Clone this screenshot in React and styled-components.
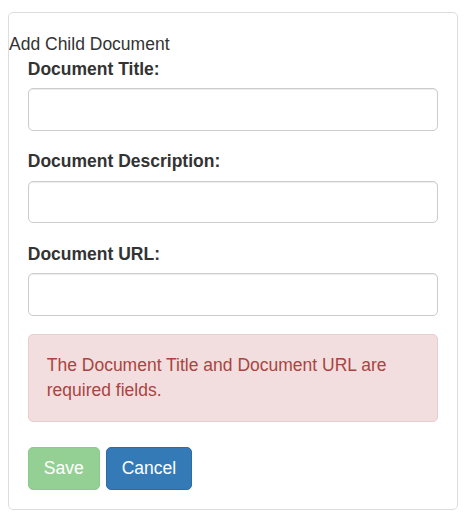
import React from "react";
import styled, { createGlobalStyle } from "styled-components";

const GlobalStyle = createGlobalStyle`
  * { box-sizing: border-box; }
  body {
    margin: 8px;
    font-family: "Liberation Sans", Arial, Helvetica, sans-serif;
    font-size: 17.5px;
    line-height: 25px;
    color: #333;
    background: #fff;
  }
`;

const Card = styled.div`
  width: 450px;
  margin-top: 4px;
  border: 1px solid #ddd;
  border-radius: 5px;
  padding: 18.75px 0 18.75px;
  background: #fff;
`;

const Title = styled.div`
  font-size: 17.5px;
  line-height: 25px;
  font-weight: normal;
  color: #333;
`;

const Body = styled.form`
  padding: 0 18.75px;
  display: flex;
  flex-direction: column;
`;

const FormGroup = styled.div`
  margin-bottom: 18.75px;
`;

const Label = styled.label`
  display: block;
  font-weight: bold;
  font-size: 17.5px;
  line-height: 25px;
  margin-bottom: 6.25px;
  color: #333;
`;

const Input = styled.input`
  display: block;
  width: 100%;
  height: 42.5px;
  padding: 7.5px 15px;
  font-family: inherit;
  font-size: 17.5px;
  color: #555;
  background: #fff;
  border: 1px solid #ccc;
  border-radius: 5px;
  box-shadow: inset 0 1px 1px rgba(0, 0, 0, 0.075);
  outline: none;
`;

const Alert = styled.div`
  padding: 18px;
  margin-bottom: 25px;
  border: 1px solid #ebccd1;
  border-radius: 5px;
  background: #f2dede;
  color: #a94442;
  font-size: 17.5px;
  line-height: 25px;
`;

const Actions = styled.div`
  display: flex;
  gap: 6px;
`;

const Button = styled.button`
  height: 42.5px;
  padding: 0 15px;
  font-family: inherit;
  font-size: 17.5px;
  line-height: 25px;
  border-radius: 5px;
  border: 1px solid ${(p) => (p.$variant === "success" ? "#4cae4c" : "#2e6da4")};
  background: ${(p) => (p.$variant === "success" ? "#5cb85c" : "#337ab7")};
  color: #fff;
  cursor: pointer;
  &:disabled {
    opacity: 0.65;
    cursor: not-allowed;
  }
`;

export default function App() {
  return (
    <>
      <GlobalStyle />
      <Card>
        <Title>Add Child Document</Title>
        <Body onSubmit={(e) => e.preventDefault()}>
          <FormGroup>
            <Label>Document Title:</Label>
            <Input type="text" />
          </FormGroup>
          <FormGroup>
            <Label>Document Description:</Label>
            <Input type="text" />
          </FormGroup>
          <FormGroup>
            <Label>Document URL:</Label>
            <Input type="text" />
          </FormGroup>
          <Alert>The Document Title and Document URL are required fields.</Alert>
          <Actions>
            <Button type="button" $variant="success" disabled>
              Save
            </Button>
            <Button type="button" $variant="primary">
              Cancel
            </Button>
          </Actions>
        </Body>
      </Card>
    </>
  );
}
